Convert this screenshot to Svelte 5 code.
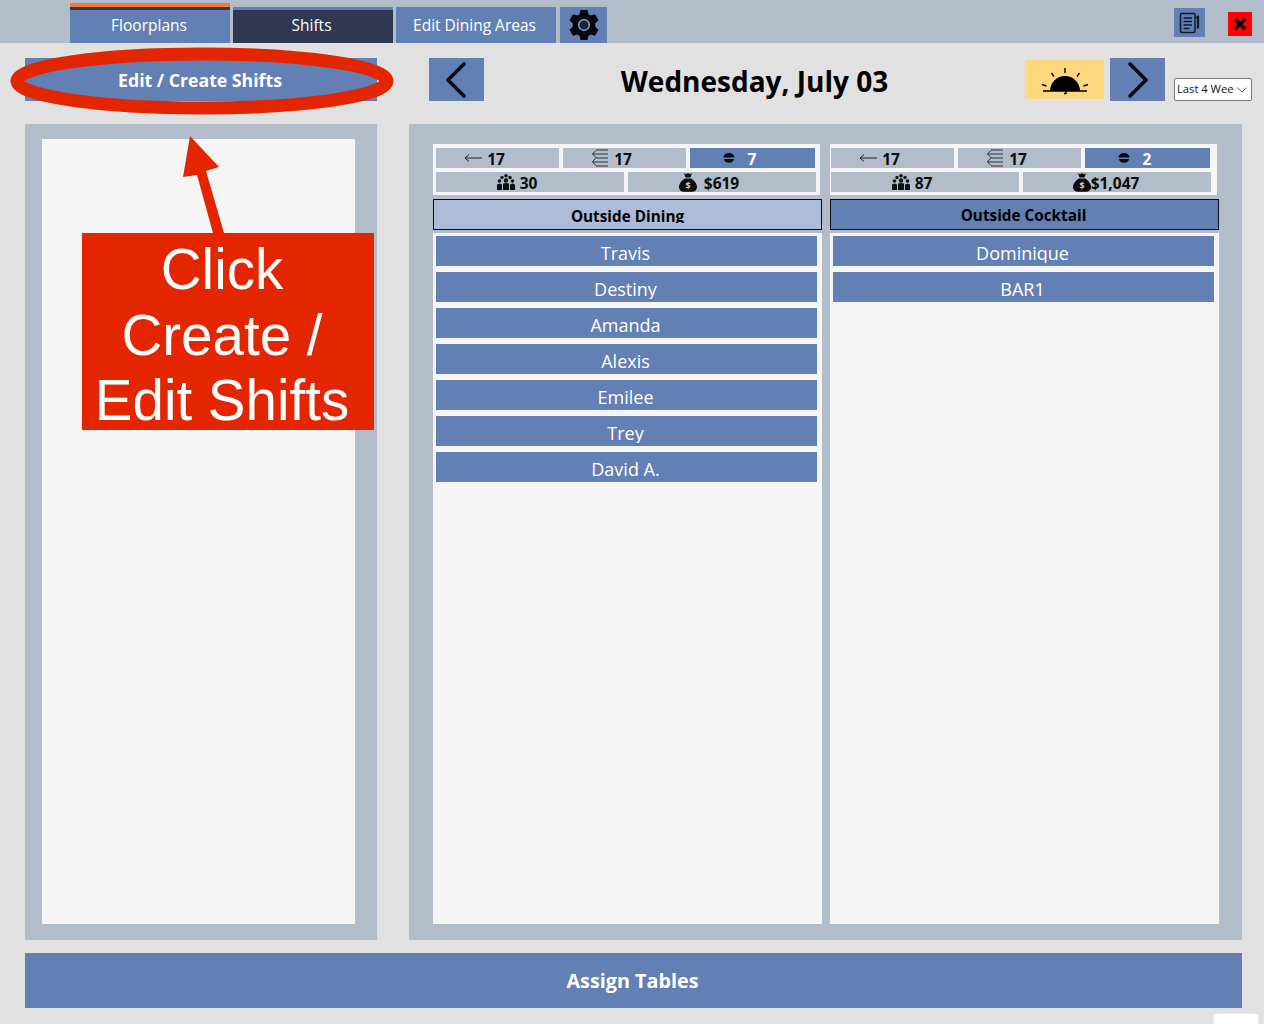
<script>
  const columns = [
    {
      name: "Outside Dining",
      light: true,
      covers: 17,
      orders: 17,
      count: 7,
      guests: 30,
      sales: "$619",
      tightSales: false,
      servers: ["Travis", "Destiny", "Amanda", "Alexis", "Emilee", "Trey", "David A."],
    },
    {
      name: "Outside Cocktail",
      light: false,
      covers: 17,
      orders: 17,
      count: 2,
      guests: 87,
      sales: "$1,047",
      tightSales: true,
      servers: ["Dominique", "BAR1"],
    },
  ];
</script>

<main class="page">
  <header class="topbar">
    <nav class="tabs">
      <button class="tab current">Floorplans</button>
      <button class="tab dark">Shifts</button>
      <button class="tab">Edit Dining Areas</button>
      <button class="tab gear" aria-label="Settings">
        <svg width="30" height="32" viewBox="0 0 30 32">
          <path d="M11.500 1h7l1 4.200 2.400 1.400 4.200-1.300 3.400 6-3.200 3v3.400l3.200 3-3.400 6-4.200-1.300-2.400 1.400-1 4.200h-7l-1-4.200-2.400-1.400-4.200 1.300-3.400-6 3.200-3v-3.400l-3.200-3 3.400-6 4.200 1.300 2.400-1.400z" fill="#05070c" />
          <circle cx="15" cy="16" r="5.300" fill="#1a2233" stroke="#7d92b8" stroke-width="1.700" />
        </svg>
      </button>
    </nav>
    <div class="top-actions">
      <button class="note" aria-label="Notes">
        <svg width="24" height="24" viewBox="0 0 24 24" fill="none" stroke="#10182c" stroke-width="1.500">
          <rect x="2.500" y="2.500" width="14.500" height="19" rx="1.500" />
          <path d="M5.500 7h8.500M5.500 10.500h8.500M5.500 14h8.500M5.500 17.500h6" />
          <path d="M20 4.500v13" stroke-width="2.200" />
          <path d="M17 6.500h3" />
        </svg>
      </button>
      <button class="close" aria-label="Close">
        <svg width="14" height="14" viewBox="0 0 14 14">
          <path d="M2 2l10 10M12 2L2 12" stroke="#130606" stroke-width="3.400" />
        </svg>
      </button>
    </div>
  </header>

  <section class="datebar">
    <button class="edit-shifts">Edit / Create Shifts</button>
    <div class="date-nav">
      <button class="arrow" aria-label="Previous day">
        <svg width="24" height="38" viewBox="0 0 24 38"><path d="M19 3L3 19l16 16" fill="none" stroke="#070a10" stroke-width="3.600" stroke-linecap="round" stroke-linejoin="round" /></svg>
      </button>
      <h1>Wednesday, July 03</h1>
      <button class="daypart" aria-label="Day part">
        <svg width="50" height="30" viewBox="0 0 50 30">
          <path d="M10 26a15 15 0 0 1 30 0z" fill="#000" />
          <path d="M3 26h44M25 3v5M11.500 8l2.500 3.500M39.500 8L37 11.500M2 19.500l4.500 1.500M48 19.500l-4.500 1.500M26 26v2.500h-2" stroke="#000" stroke-width="1.400" fill="none" />
        </svg>
      </button>
      <button class="arrow" aria-label="Next day">
        <svg width="24" height="38" viewBox="0 0 24 38"><path d="M4 3l16 16L4 35" fill="none" stroke="#070a10" stroke-width="3.600" stroke-linecap="round" stroke-linejoin="round" /></svg>
      </button>
      <div class="range">
        <span>Last 4 Wee</span>
        <svg width="10" height="6" viewBox="0 0 10 6"><path d="M.5.500L5 5 9.500.500" fill="none" stroke="#666" /></svg>
      </div>
    </div>
  </section>

  <section class="content">
    <aside class="unassigned">
      <div class="unassigned-list"></div>
    </aside>

    <div class="sections">
      {#each columns as col}
        <div class="col">
          <div class="stats">
            <div class="stat-row three">
              <div class="stat">
                <svg width="18" height="8" viewBox="0 0 18 8"><path d="M1 4h17M5 .5L1 4l4 3.500" fill="none" stroke="#222" /></svg>
                <b>{col.covers}</b>
              </div>
              <div class="stat">
                <svg width="18" height="18" viewBox="0 0 18 18" fill="none" stroke="#222" stroke-width="0.900">
                  <path d="M5 1h12M1.500 5H17M5 9h12M1.500 13H17M5 17h12" />
                  <path d="M5 1.500L1.500 5 5 8.500 1.500 13 5 16.500" />
                </svg>
                <b>{col.orders}</b>
              </div>
              <div class="stat active">
                <svg width="12" height="10" viewBox="0 0 12 10">
                  <path d="M.5 4.500a5.500 4.500 0 0 1 11 0zM1 6h10a5 3.800 0 0 1-10 0z" fill="#0a0d14" />
                </svg>
                <b>{col.count}</b>
              </div>
            </div>
            <div class="stat-row two">
              <div class="stat">
                <svg width="18" height="16" viewBox="0 0 18 16" fill="#111">
                  <circle cx="9" cy="1.800" r="1.800" /><circle cx="5" cy="3.500" r="1.700" /><circle cx="13" cy="3.500" r="1.700" />
                  <circle cx="2.500" cy="7" r="1.800" /><circle cx="15.500" cy="7" r="1.800" /><circle cx="9" cy="6.500" r="2.200" />
                  <path d="M0 16v-5.500L2.500 9.500l2.500 1V16zM6 16v-6.500L9 9l3 .5V16zM13 16v-5.500l2.500-1 2.500 1V16z" />
                </svg>
                <b>{col.guests}</b>
              </div>
              <div class="stat" class:tight={col.tightSales} class:bag={!col.tightSales}>
                <svg width="18" height="19" viewBox="0 0 18 19">
                  <path d="M5 0l2 1.200L9 0l2 1.200L13 0l-1.500 4.500h-5zM6 5.500h6c3.500 2 6 5.500 6 8.500 0 3-2 4.800-5 4.800H5c-3 0-5-1.800-5-4.800C0 11 2.500 7.500 6 5.500z" fill="#0b0b0b" />
                  <text x="9" y="16" font-size="9" font-weight="700" text-anchor="middle" fill="#cfd6de" font-family="Open Sans, sans-serif">$</text>
                </svg>
                <b>{col.sales}</b>
              </div>
            </div>
          </div>
          <div class="col-title" class:light={col.light}><span>{col.name}</span></div>
          <ul class="servers">
            {#each col.servers as name}
              <li><span>{name}</span></li>
            {/each}
          </ul>
        </div>
      {/each}
    </div>
  </section>

  <button class="assign">Assign Tables</button>
  <div class="corner-tab"></div>

  <!-- tutorial markup drawn on top of the screen -->
  <svg class="markup" width="400" height="240" viewBox="0 0 400 240">
    <ellipse cx="202" cy="81" rx="185" ry="27" fill="none" stroke="#e32600" stroke-width="13" />
    <path d="M190 136l29 31-13 4 18 62h-11l-16-58-14 2z" fill="#e32600" />
  </svg>
  <div class="callout">Click<br />Create /<br />Edit Shifts</div>
</main>

<style>
  :global(body) {
    margin: 0;
    background: #e1e1e1;
  }

  .page {
    position: relative;
    width: 1264px;
    height: 1024px;
    overflow: hidden;
    display: flex;
    flex-direction: column;
    font-family: "Open Sans", "Noto Sans", sans-serif;
    background: #e1e1e1;
  }

  button {
    border: none;
    padding: 0;
    font-family: inherit;
    color: #fff;
    background: #6280b3;
  }

  .topbar {
    height: 43px;
    flex: none;
    display: flex;
    justify-content: space-between;
    background: #b2bdc9;
    padding-left: 70px;
    box-sizing: border-box;
  }

  .tabs {
    display: flex;
    gap: 3px;
    align-items: flex-end;
  }

  .tab {
    width: 160px;
    height: 36px;
    padding: 0 3px 1px 0;
    font-size: 15.500px;
    font-weight: 500;
    box-sizing: border-box;
  }

  .tab.current {
    height: 40px;
    border-top: 4px solid #ef7c2e;
    box-shadow: inset 0 3px 0 #2f3753;
    padding: 0 2px 1px 0;
  }

  .tab.dark {
    background: #2f3753;
    border-top: 3px solid #6280b3;
    padding: 0 3px 3px 0;
  }

  .tab.gear {
    width: 47px;
    margin-left: 1px;
    display: flex;
    align-items: center;
    justify-content: center;
    padding: 0;
  }

  .top-actions {
    display: flex;
    align-items: flex-start;
    gap: 23px;
    padding: 8px 12px 0 0;
  }

  .note {
    width: 31px;
    height: 29px;
    display: flex;
    align-items: center;
    justify-content: center;
  }

  .close {
    width: 24px;
    height: 24px;
    margin-top: 4px;
    background: #fb0006;
    display: flex;
    align-items: center;
    justify-content: center;
  }

  .datebar {
    height: 43px;
    flex: none;
    margin-top: 15px;
    display: flex;
    padding-left: 25px;
  }

  .edit-shifts {
    width: 352px;
    height: 43px;
    padding-right: 2px;
    font-size: 17.700px;
    font-weight: 700;
  }

  .date-nav {
    margin-left: 52px;
    display: flex;
    width: 823px;
    height: 43px;
  }

  .arrow {
    width: 55px;
    height: 43px;
    flex: none;
    display: flex;
    align-items: center;
    justify-content: center;
  }

  h1 {
    margin: 0;
    width: 541px;
    flex: none;
    text-align: center;
    font-size: 28px;
    line-height: 47px;
    font-weight: 700;
    color: #000;
    white-space: nowrap;
  }

  .daypart {
    width: 79px;
    height: 39px;
    margin: 2px 6px 0 0;
    flex: none;
    background: #ffd77f;
    display: flex;
    align-items: center;
    justify-content: center;
  }

  .range {
    width: 78px;
    height: 23px;
    margin: 20px 0 0 9px;
    flex: none;
    box-sizing: border-box;
    background: #fff;
    border: 1px solid #7a7a7a;
    border-radius: 2px;
    display: flex;
    align-items: center;
    justify-content: space-between;
    padding: 0 4px 2px 2px;
    font-size: 11.200px;
    color: #111;
    white-space: nowrap;
  }

  .range svg {
    margin-top: 3px;
  }

  .content {
    height: 816px;
    flex: none;
    margin: 23px 22px 0 25px;
    display: flex;
    gap: 32px;
  }

  .unassigned {
    width: 352px;
    flex: none;
    background: #b2bdc9;
    padding: 15px 22px 16px 17px;
    box-sizing: border-box;
  }

  .unassigned-list {
    height: 100%;
    background: #f5f5f5;
  }

  .sections {
    flex: 1;
    background: #b2bdc9;
    padding: 20px 23px 16px 24px;
    box-sizing: border-box;
    display: flex;
    gap: 8px;
  }

  .col {
    width: 389px;
    display: flex;
    flex-direction: column;
  }

  .stats {
    width: 387px;
    height: 51px;
    box-sizing: border-box;
    background: #f5f5f5;
    padding: 4px 3px;
    display: flex;
    flex-direction: column;
    gap: 4px;
  }

  .col:last-child .stats {
    padding-left: 1px;
  }

  .stat-row {
    display: grid;
    gap: 4px;
    height: 20px;
  }

  .stat-row.three {
    grid-template-columns: 123px 123px 125px;
  }

  .stat-row.two {
    grid-template-columns: 188px 188px;
  }

  .stat {
    background: #b2bdc9;
    display: flex;
    align-items: center;
    justify-content: center;
    gap: 5px;
    padding-right: 26px;
    box-sizing: border-box;
    font-size: 15.500px;
    color: #0b0b0b;
    overflow: hidden;
  }

  .stat b {
    font-weight: 700;
    line-height: 20px;
    padding-top: 1px;
  }

  .stat.active {
    background: #6280b3;
    gap: 13px;
  }

  .stat.active b {
    color: #fff;
  }

  .stat.tight {
    gap: 0;
    padding-right: 22px;
  }

  .stat.bag {
    gap: 7px;
  }

  .col-title {
    height: 31px;
    margin-top: 4px;
    box-sizing: border-box;
    border: 1px solid #0c0c14;
    background: #6280b3;
    text-align: center;
    color: #000;
    font-size: 15.300px;
    font-weight: 700;
    overflow: hidden;
  }

  .col-title span {
    display: block;
    line-height: 30px;
    height: 29px;
    padding-right: 2px;
    overflow: hidden;
  }

  .col-title.light {
    background: #adbcd9;
  }

  .col-title.light span {
    padding: 3px 0 0;
    height: 20px;
    line-height: 26px;
  }

  .servers {
    list-style: none;
    margin: 3px 0 0;
    padding: 3px 5px 0 3px;
    flex: 1;
    background: #f5f5f5;
    display: flex;
    flex-direction: column;
    gap: 6px;
  }

  .servers li {
    height: 30px;
    background: #6280b3;
    color: #fff;
    text-align: center;
    font-size: 18px;
    font-weight: 500;
    overflow: hidden;
  }

  .servers li span {
    display: block;
    height: 23px;
    margin: 4px 2px 0 0;
    line-height: 26px;
    overflow: hidden;
  }

  .assign {
    height: 55px;
    flex: none;
    margin: 13px 22px 0 25px;
    padding: 0 2px 0 0;
    font-size: 19.800px;
    font-weight: 700;
  }

  .corner-tab {
    position: absolute;
    left: 1213px;
    top: 1013px;
    width: 46px;
    height: 20px;
    background: #fff;
    border: 1px solid #e9e9e9;
    box-sizing: border-box;
    border-radius: 4px;
  }

  .markup {
    position: absolute;
    left: 0;
    top: 0;
    pointer-events: none;
  }

  .callout {
    position: absolute;
    left: 82px;
    top: 233px;
    width: 292px;
    height: 197px;
    padding: 4px 12px 0 0;
    box-sizing: border-box;
    background: #e32600;
    color: #fff;
    text-align: center;
    font-family: "Liberation Sans", Arial, sans-serif;
    font-size: 56.500px;
    line-height: 65.500px;
  }
</style>
